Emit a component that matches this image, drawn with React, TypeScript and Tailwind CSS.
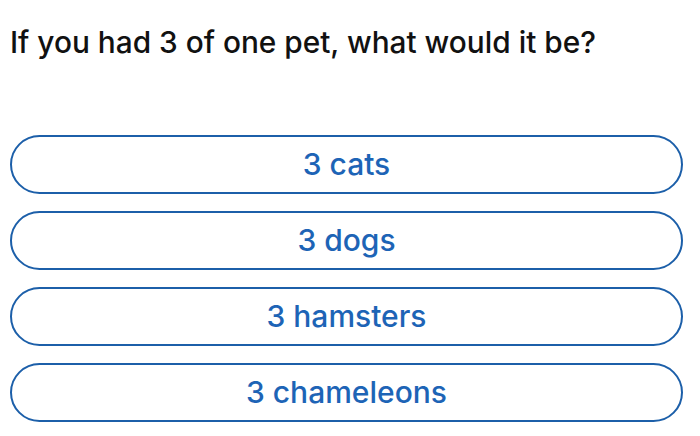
const options = ["3 cats", "3 dogs", "3 hamsters", "3 chameleons"]

export default function App() {
  return (
    <div className="h-[436px] w-[700px] overflow-hidden bg-white font-['Inter','Liberation_Sans',sans-serif]">
      <h1 className="pl-[10px] pt-[22px] text-[29.8px] font-medium leading-[40px] text-[#111111]">
        If you had 3 of one pet, what would it be?
      </h1>
      <div className="mt-[73px] flex flex-col gap-[17px] pl-[10px] pr-[17px]">
        {options.map((o) => (
          <button
            key={o}
            className="h-[59px] w-full rounded-full border-2 border-[#1c5fa9] text-[30px] font-medium text-[#1d64b6]"
          >
            {o}
          </button>
        ))}
      </div>
    </div>
  )
}
